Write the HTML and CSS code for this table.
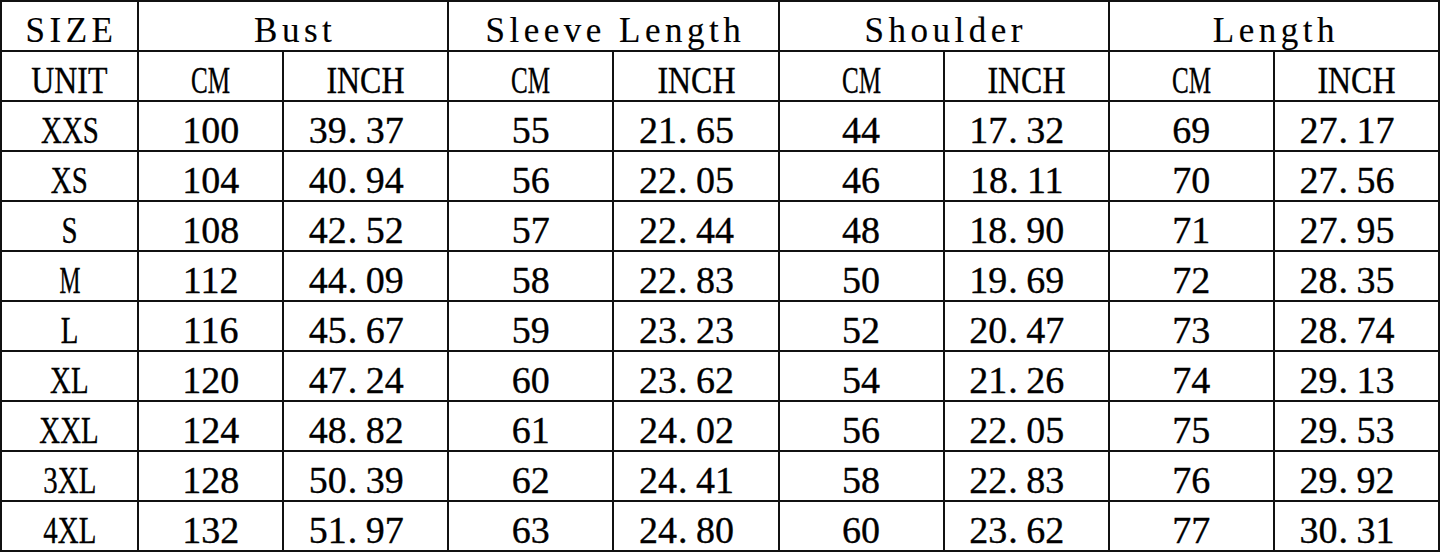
FILE: index.html
```html
<!DOCTYPE html>
<html lang="en">
<head>
<meta charset="utf-8">
<title>Size Chart</title>
<link rel="stylesheet" href="styles.css">
</head>
<body>
<table class="chart">
  <colgroup>
    <col class="c-size">
    <col class="c-cm1">
    <col class="c-std">
    <col class="c-std">
    <col class="c-std">
    <col class="c-std">
    <col class="c-std">
    <col class="c-std">
    <col class="c-std">
  </colgroup>
  <thead>
    <tr class="head1">
      <th>SIZE</th>
      <th colspan="2">Bust</th>
      <th colspan="2">Sleeve Length</th>
      <th colspan="2">Shoulder</th>
      <th colspan="2">Length</th>
    </tr>
    <tr class="head2">
      <th><span class="lab wide">UNIT</span></th>
      <th><span class="lab narrow">CM</span></th><th><span class="lab wide">INCH</span></th>
      <th><span class="lab narrow">CM</span></th><th><span class="lab wide">INCH</span></th>
      <th><span class="lab narrow">CM</span></th><th><span class="lab wide">INCH</span></th>
      <th><span class="lab narrow">CM</span></th><th><span class="lab wide">INCH</span></th>
    </tr>
  </thead>
  <tbody>
    <tr><td><span class="lab">XXS</span></td><td>100</td><td class="dec">39<span class="dot">.</span>37</td><td>55</td><td class="dec">21<span class="dot">.</span>65</td><td>44</td><td class="dec">17<span class="dot">.</span>32</td><td>69</td><td class="dec">27<span class="dot">.</span>17</td></tr>
    <tr><td><span class="lab">XS</span></td><td>104</td><td class="dec">40<span class="dot">.</span>94</td><td>56</td><td class="dec">22<span class="dot">.</span>05</td><td>46</td><td class="dec">18<span class="dot">.</span>11</td><td>70</td><td class="dec">27<span class="dot">.</span>56</td></tr>
    <tr><td><span class="lab">S</span></td><td>108</td><td class="dec">42<span class="dot">.</span>52</td><td>57</td><td class="dec">22<span class="dot">.</span>44</td><td>48</td><td class="dec">18<span class="dot">.</span>90</td><td>71</td><td class="dec">27<span class="dot">.</span>95</td></tr>
    <tr><td><span class="lab narrow-m">M</span></td><td>112</td><td class="dec">44<span class="dot">.</span>09</td><td>58</td><td class="dec">22<span class="dot">.</span>83</td><td>50</td><td class="dec">19<span class="dot">.</span>69</td><td>72</td><td class="dec">28<span class="dot">.</span>35</td></tr>
    <tr><td><span class="lab">L</span></td><td>116</td><td class="dec">45<span class="dot">.</span>67</td><td>59</td><td class="dec">23<span class="dot">.</span>23</td><td>52</td><td class="dec">20<span class="dot">.</span>47</td><td>73</td><td class="dec">28<span class="dot">.</span>74</td></tr>
    <tr><td><span class="lab">XL</span></td><td>120</td><td class="dec">47<span class="dot">.</span>24</td><td>60</td><td class="dec">23<span class="dot">.</span>62</td><td>54</td><td class="dec">21<span class="dot">.</span>26</td><td>74</td><td class="dec">29<span class="dot">.</span>13</td></tr>
    <tr><td><span class="lab">XXL</span></td><td>124</td><td class="dec">48<span class="dot">.</span>82</td><td>61</td><td class="dec">24<span class="dot">.</span>02</td><td>56</td><td class="dec">22<span class="dot">.</span>05</td><td>75</td><td class="dec">29<span class="dot">.</span>53</td></tr>
    <tr><td><span class="lab">3XL</span></td><td>128</td><td class="dec">50<span class="dot">.</span>39</td><td>62</td><td class="dec">24<span class="dot">.</span>41</td><td>58</td><td class="dec">22<span class="dot">.</span>83</td><td>76</td><td class="dec">29<span class="dot">.</span>92</td></tr>
    <tr><td><span class="lab">4XL</span></td><td>132</td><td class="dec">51<span class="dot">.</span>97</td><td>63</td><td class="dec">24<span class="dot">.</span>80</td><td>60</td><td class="dec">23<span class="dot">.</span>62</td><td>77</td><td class="dec">30<span class="dot">.</span>31</td></tr>
  </tbody>
</table>
</body>
</html>
```

FILE: styles.css
```css
html, body {
  margin: 0;
  padding: 0;
  background: #fff;
}

.chart {
  border-collapse: collapse;
  table-layout: fixed;
  width: 1440px;
  font-family: "Liberation Serif", "Times New Roman", serif;
  color: #000;
}

.c-size { width: 137px; }
.c-cm1 { width: 145px; }
.c-std { width: 165px; }

.chart th,
.chart td {
  border: 2px solid #111;
  padding: 0 0 1px 0;
  text-align: center;
  vertical-align: bottom;
  font-weight: normal;
  font-size: 38px;
  line-height: 38px;
  white-space: nowrap;
  overflow: visible;
  -webkit-text-stroke: 0.35px #000;
}

.chart tr {
  height: 50px;
}

.head1 th {
  font-size: 35px;
  line-height: 35px;
  letter-spacing: 4.5px;
  padding-left: 4px;
  padding-bottom: 2px;
  -webkit-text-stroke: 0.15px #000;
}

.lab {
  display: inline-block;
  transform: scaleX(0.76);
  transform-origin: center;
}

.lab.wide {
  transform: scaleX(0.84);
}

.lab.narrow {
  transform: scaleX(0.66);
}

.lab.narrow-m {
  transform: scaleX(0.62);
}

.dec {
  padding-right: 19px !important;
}

.dot {
  display: inline-block;
  width: 0.5em;
  text-align: left;
  text-indent: 1px;
}
```
